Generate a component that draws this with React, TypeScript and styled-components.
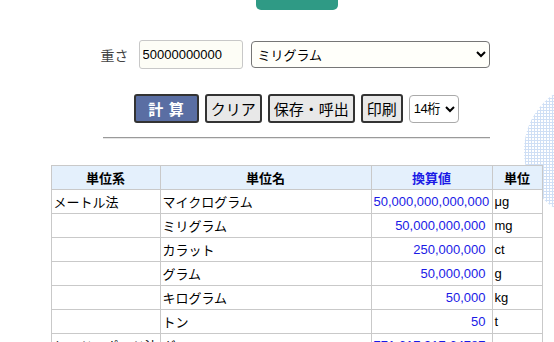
import React from "react";
import styled, { createGlobalStyle } from "styled-components";

const Global = createGlobalStyle`
  html, body { margin: 0; padding: 0; background: #fff; }
  body { font-family: "Liberation Sans", "Noto Sans CJK JP", sans-serif; color: #000; }
`;

const Page = styled.div`
  position: relative;
  width: 554px;
  height: 342px;
  overflow: hidden;
`;

const Dots = styled.div`
  position: absolute;
  left: 524px;
  top: 82px;
  width: 138px;
  height: 138px;
  border-radius: 50%;
  background-image: radial-gradient(circle, #cfdff5 1px, transparent 1.3px);
  background-size: 3px 3px;
  z-index: 0;
`;

const Main = styled.div`
  position: relative;
  z-index: 1;
  margin-left: 51px;
  width: 491px;
  display: flex;
  flex-direction: column;
  align-items: center;
`;

const Tab = styled.div`
  width: 82px;
  height: 10px;
  background: #2f9a85;
  border-radius: 0 0 5px 5px;
`;

const FormRow = styled.div`
  margin-top: 30px;
  display: flex;
  align-items: center;
  height: 29px;
  margin-right: 3px;
`;

const Label = styled.span`
  font-size: 14px;
  color: #444;
  margin-right: 10px;
  font-family: "Noto Sans CJK JP", sans-serif;
`;

const NumInput = styled.input`
  box-sizing: border-box;
  width: 104px;
  height: 29px;
  padding: 0 3px;
  border: 1px solid #c8c8c8;
  border-radius: 3px;
  background: #fdfdf6;
  font-family: "Liberation Sans", sans-serif;
  font-size: 13px;
  color: #000;
  margin-right: 8px;
`;

const UnitSelect = styled.select`
  box-sizing: border-box;
  width: 239px;
  height: 27px;
  border: 1px solid #767676;
  border-radius: 4px;
  background: #fffffa;
  font-family: "Noto Sans CJK JP", sans-serif;
  font-size: 13px;
  color: #000;
  padding-left: 2px;
`;

const ButtonRow = styled.div`
  margin-top: 25px;
  display: flex;
  align-items: center;
  gap: 6px;
`;

const Btn = styled.button<{ $primary?: boolean }>`
  box-sizing: border-box;
  height: 29px;
  padding: 0 ${(p) => (p.$primary ? "12px" : "4px")};
  border: 2px solid #333;
  border-radius: 3px;
  background: ${(p) => (p.$primary ? "#5a6ea3" : "#e8e8e8")};
  color: ${(p) => (p.$primary ? "#fff" : "#000")};
  font-weight: ${(p) => (p.$primary ? 700 : 400)};
  font-family: "Noto Sans CJK JP", sans-serif;
  font-size: 15px;
  line-height: 1;
  letter-spacing: ${(p) => (p.$primary ? "1px" : "0")};
`;

const DigitSelect = styled.select`
  box-sizing: border-box;
  width: 50px;
  height: 28px;
  border: 1px solid #aaa;
  border-radius: 4px;
  background: #fff;
  font-family: "Liberation Sans", "Noto Sans CJK JP", sans-serif;
  font-size: 13px;
  color: #000;
  letter-spacing: -0.5px;
`;

const Rule = styled.hr`
  box-sizing: border-box;
  width: 387px;
  margin: 14px 0 0;
  border: none;
  border-top: 1px solid #9a9a9a;
  border-bottom: 1px solid #e6e6e6;
`;

const Table = styled.table`
  margin-top: 26px;
  width: 491px;
  border-collapse: collapse;
  table-layout: fixed;
  font-size: 13px;
`;

const Th = styled.th<{ $blue?: boolean }>`
  height: 23px;
  padding: 0;
  border: 1px solid #c9c9c9;
  background: #e4f0fc;
  font-weight: 700;
  text-align: center;
  font-family: "Noto Sans CJK JP", sans-serif;
  color: ${(p) => (p.$blue ? "#1a1ae6" : "#000")};
`;

const Td = styled.td<{ $num?: boolean }>`
  height: 23px;
  padding: 0 ${(p) => (p.$num ? "6px" : "2px")} 0 2px;
  border: 1px solid #c9c9c9;
  background: #fff;
  text-align: ${(p) => (p.$num ? "right" : "left")};
  color: ${(p) => (p.$num ? "#1a1ae6" : "#000")};
  font-family: ${(p) =>
    p.$num ? '"Liberation Sans", sans-serif' : '"Liberation Sans", "Noto Sans CJK JP", sans-serif'};
  white-space: nowrap;
  overflow: hidden;
`;

const rows = [
  ["メートル法", "マイクログラム", "50,000,000,000,000", "μg"],
  ["", "ミリグラム", "50,000,000,000", "mg"],
  ["", "カラット", "250,000,000", "ct"],
  ["", "グラム", "50,000,000", "g"],
  ["", "キログラム", "50,000", "kg"],
  ["", "トン", "50", "t"],
  ["ヤード・ポンド法", "グレーン", "771,617,917.64787", "gr"],
];

export default function App() {
  return (
    <Page>
      <Global />
      <Dots />
      <Main>
        <Tab />
        <FormRow>
          <Label>重さ</Label>
          <NumInput defaultValue="50000000000" />
          <UnitSelect defaultValue="mg">
            <option value="ug">マイクログラム</option>
            <option value="mg">ミリグラム</option>
            <option value="g">グラム</option>
          </UnitSelect>
        </FormRow>
        <ButtonRow>
          <Btn $primary>計 算</Btn>
          <Btn>クリア</Btn>
          <Btn>保存・呼出</Btn>
          <Btn>印刷</Btn>
          <DigitSelect defaultValue="14">
            <option value="14">14桁</option>
          </DigitSelect>
        </ButtonRow>
        <Rule />
        <Table>
          <colgroup>
            <col style={{ width: 109 }} />
            <col style={{ width: 211 }} />
            <col style={{ width: 121 }} />
            <col style={{ width: 50 }} />
          </colgroup>
          <thead>
            <tr>
              <Th>単位系</Th>
              <Th>単位名</Th>
              <Th $blue>換算値</Th>
              <Th>単位</Th>
            </tr>
          </thead>
          <tbody>
            {rows.map((r, i) => (
              <tr key={i}>
                <Td>{r[0]}</Td>
                <Td>{r[1]}</Td>
                <Td $num>{r[2]}</Td>
                <Td>{r[3]}</Td>
              </tr>
            ))}
          </tbody>
        </Table>
      </Main>
    </Page>
  );
}
